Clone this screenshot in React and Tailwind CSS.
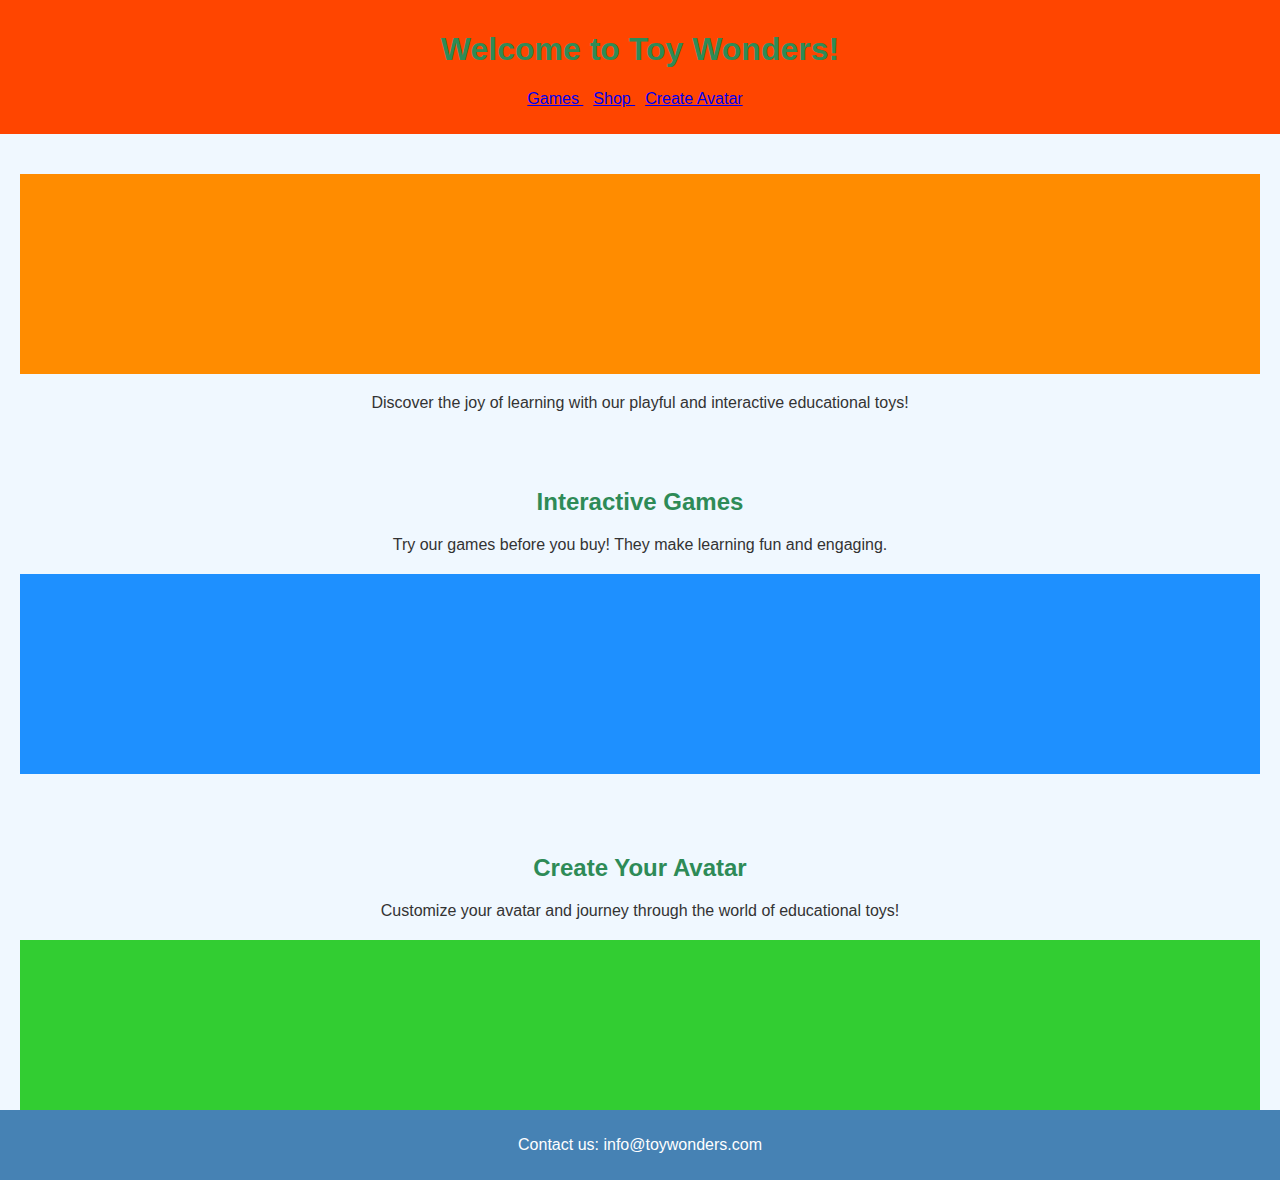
import React from 'react'

export default function App() {
  const links = ['Games', 'Shop', 'Create Avatar']

  return (
    <div className="min-h-screen bg-[#f0f8ff] text-[#333] font-['Liberation_Sans',Arial,sans-serif] pb-[110px]">
      {/* Header */}
      <header className="bg-[#ff4500] text-center pt-[31px] pb-[26px]">
        <h1 className="text-[32px] leading-[37px] font-bold text-[#2e8b57]">Welcome to Toy Wonders!</h1>
        <nav className="mt-[22px] text-[16px] leading-[18px]">
          {links.map((label, idx) => (
            <a
              key={idx}
              href="#"
              className="text-[#0000ee] underline mr-[10px] whitespace-pre"
            >
              {idx < links.length - 1 ? label + ' ' : label}
            </a>
          ))}
        </nav>
      </header>

      <main className="px-[20px] text-center text-[16px]">
        {/* Hero */}
        <section className="pt-[40px]">
          <div className="h-[200px] bg-[#ff8c00]"></div>
          <p className="mt-[20px] leading-[18px]">
            Discover the joy of learning with our playful and interactive educational toys!
          </p>
        </section>

        {/* Games */}
        <section className="mt-[76px]">
          <h2 className="text-[24px] leading-[28px] font-bold text-[#2e8b57]">Interactive Games</h2>
          <p className="mt-[20px] leading-[18px]">
            Try our games before you buy! They make learning fun and engaging.
          </p>
          <div className="mt-[20px] h-[200px] bg-[#1e90ff]"></div>
        </section>

        {/* Avatar */}
        <section className="mt-[80px]">
          <h2 className="text-[24px] leading-[28px] font-bold text-[#2e8b57]">Create Your Avatar</h2>
          <p className="mt-[20px] leading-[18px]">
            Customize your avatar and journey through the world of educational toys!
          </p>
          <div className="mt-[20px] h-[200px] bg-[#32cd32]"></div>
        </section>
      </main>

      {/* Footer */}
      <footer className="fixed bottom-0 left-0 right-0 h-[70px] bg-[#4682b4] text-white text-[16px] flex items-center justify-center">
        <p>Contact us: info@toywonders.com</p>
      </footer>
    </div>
  )
}
